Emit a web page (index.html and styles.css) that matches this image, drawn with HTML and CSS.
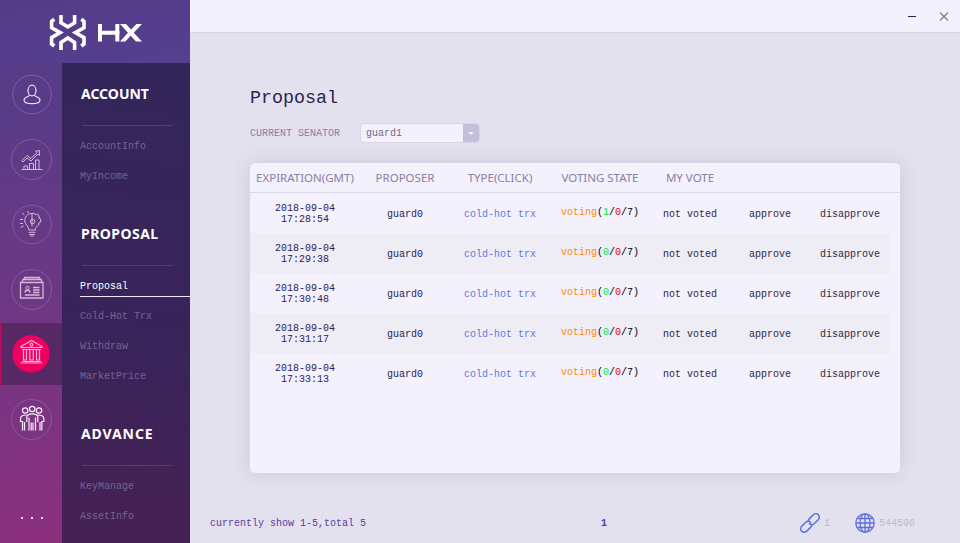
FILE: index.html
```html
<!DOCTYPE html>
<html lang="en">
<head>
<meta charset="utf-8">
<title>HX Wallet</title>
<link rel="stylesheet" href="styles.css">
</head>
<body>
<div class="app">
  <aside class="sidebar">
    <div class="brand">
      <svg width="94" height="36" viewBox="49 14 94 36" fill="none" stroke="#fff">
        <g stroke-width="3.600">
          <path d="M61 15v7.800l6.800 4 6.800-4V15"/>
          <path d="M61 50v-7.500l6.800-4.500 6.800 4.500V50"/>
          <path d="M54.300 19.300l-2.700 2v6.400l8.600 4.900-8.600 5v6.400l2.700 2"/>
          <path d="M81.300 19.300l2.700 2v6.400l-8.600 4.900 8.600 5v6.400l-2.700 2"/>
        </g>
        <path stroke-width="4" d="M100 24v17.500M117.300 24v17.500M98.500 32.800h21"/>
        <path fill="#fff" stroke="none" d="M120 24h6l5 5.500 5.500-5.500h5.500l-8.300 8.700 8.300 8.800h-6l-5.300-5.800-5.400 5.800h-5.300l8-8.700z"/>
      </svg>
    </div>
    <div class="side-body">
      <nav class="rail">
        <a class="rail-item"><svg width="41" height="41" viewBox="11 74 41 41"><circle class="ring" cx="32" cy="94.500" r="19.300"/><ellipse cx="32" cy="90.500" rx="4" ry="5.300"/><path d="M29.700 95.200c-.5 1.500-5.700 1.600-5.700 5.100 0 2.200 2.500 3.400 8 3.400s8-1.200 8-3.400c0-3.500-5.200-3.600-5.700-5.100"/></svg></a>
        <a class="rail-item"><svg width="41" height="41" viewBox="11 139 41 41"><circle class="ring" cx="31.500" cy="159.500" r="20"/><path d="M21.500 169.500h21M24 169.500v-3.500h3.500v3.500M29.500 169.500v-6h4v6M35.500 169.500v-9.500h3.500v9.500M22 160.500l5-5 4 3 6-6-1.500-1.200 4-.8v5l-1.500-1.500-7 7-4-3-4 4z"/></svg></a>
        <a class="rail-item"><svg width="41" height="41" viewBox="11 204 41 41"><circle class="ring" cx="32" cy="224.500" r="19.300"/><path d="M32 213.500c-5 0-7.500 4-7.200 7.500.3 4 4 5 4 9h6.500c0-2 1-3 2-4l1.500-1v-2l2-1v-3l-2-1 .5-2-2-2-2 .8-1-1.600zM32 213.500v13M28.800 232.300h6.500M29 234.500h6M30.500 236h3M20 219.500h3M20.500 227.500l3-1.500M22 213l2.500 2M28 211v2M20 223.500h3"/><circle cx="32.500" cy="221.500" r="2.200"/></svg></a>
        <a class="rail-item"><svg width="41" height="41" viewBox="11 269 41 41"><circle class="ring" cx="31.500" cy="289.500" r="20"/><path stroke-width="1.300" d="M20.500 282.500h22.500v15.500H20.500zM22 282l1-2.500h18l1 2.500M24 279l.7-1.500h14.600l.7 1.500M25 292.500c0-3 5-3 5 0M33 287.500h6.500M33 290h6.500M33 292.500h6.500M25 295h14.500"/><circle cx="27.500" cy="288" r="1.700"/></svg></a>
        <a class="rail-item active"><svg width="41" height="41" viewBox="11 334 41 41"><circle class="disc" cx="31" cy="354" r="18.700"/><path d="M21 346.500l10.500-6 10.500 6v1h-21zM22 349.500h19M23.500 350v10h3v-10M29.800 350v10h3.500v-10M36.500 350v10h3v-10M22 361.500h19M20.500 363h22"/><circle cx="31.500" cy="344.800" r="1.400"/></svg></a>
        <a class="rail-item people"><svg width="41" height="41" viewBox="11 399 41 41"><circle class="ring" cx="31.500" cy="419.500" r="20"/><circle cx="32.200" cy="409" r="2.700"/><circle cx="25.200" cy="410.500" r="2.700"/><circle cx="39" cy="410.500" r="2.700"/><path d="M22.500 430.500v-9h-2v-3c0-3 2-3.500 6-3.500M41.800 430.500v-9h2v-3c0-3-2-3.500-6-3.500M26.800 422v-5c0-2.500 2-3.200 5.500-3.200s5.500.7 5.500 3.200v5M29 417.500v13M35.500 417.500v13M24.500 422v8.500M40 422v8.500M31.200 422.500v8M33 422.500v8"/></svg></a>
        <div class="more"><i></i><i></i><i></i></div>
      </nav>
      <nav class="menu">
        <section class="group">
          <h2>ACCOUNT</h2>
          <a>AccountInfo</a><a>MyIncome</a>
        </section>
        <section class="group">
          <h2 class="g-proposal">PROPOSAL</h2>
          <a class="current">Proposal</a><a>Cold-Hot Trx</a><a>Withdraw</a><a>MarketPrice</a>
        </section>
        <section class="group">
          <h2 class="g-advance">ADVANCE</h2>
          <a>KeyManage</a><a>AssetInfo</a>
        </section>
      </nav>
    </div>
  </aside>
  <main class="main">
    <header class="titlebar">
      <svg width="44" height="12" viewBox="906 10 44 12" fill="none"><path d="M908 16.500h8" stroke="#2c1e5c"/><path d="M940 12.500l8 8M948 12.500l-8 8" stroke="#837b99" stroke-width="1.200"/></svg>
    </header>
    <div class="content">
      <h1>Proposal</h1>
      <div class="filter">
        <span class="label">CURRENT SENATOR</span>
        <div class="select"><span>guard1</span><b></b></div>
      </div>
      <div class="card">
        <div class="row head"><span>EXPIRATION(GMT)</span><span>PROPOSER</span><span>TYPE(CLICK)</span><span>VOTING STATE</span><span>MY VOTE</span></div>
        <div class="row"><span class="time">2018-09-04<br>17:28:54</span><span>guard0</span><span class="link">cold-hot trx</span><span class="state">voting<em>(<i>1</i>/<b>0</b>/7)</em></span><span>not voted</span><span class="action">approve</span><span class="action">disapprove</span></div>
        <div class="row"><span class="time">2018-09-04<br>17:29:38</span><span>guard0</span><span class="link">cold-hot trx</span><span class="state">voting<em>(<i>0</i>/<b>0</b>/7)</em></span><span>not voted</span><span class="action">approve</span><span class="action">disapprove</span></div>
        <div class="row"><span class="time">2018-09-04<br>17:30:48</span><span>guard0</span><span class="link">cold-hot trx</span><span class="state">voting<em>(<i>0</i>/<b>0</b>/7)</em></span><span>not voted</span><span class="action">approve</span><span class="action">disapprove</span></div>
        <div class="row"><span class="time">2018-09-04<br>17:31:17</span><span>guard0</span><span class="link">cold-hot trx</span><span class="state">voting<em>(<i>0</i>/<b>0</b>/7)</em></span><span>not voted</span><span class="action">approve</span><span class="action">disapprove</span></div>
        <div class="row"><span class="time">2018-09-04<br>17:33:13</span><span>guard0</span><span class="link">cold-hot trx</span><span class="state">voting<em>(<i>0</i>/<b>0</b>/7)</em></span><span>not voted</span><span class="action">approve</span><span class="action">disapprove</span></div>
      </div>
    </div>
    <footer class="footer">
      <span class="summary">currently show 1-5,total 5</span>
      <span class="page">1</span>
      <span class="status">
        <svg width="22" height="22" viewBox="0 0 22 22" fill="none" stroke="#5a6fe0" stroke-width="1.500"><g transform="rotate(-45 11 11)"><path d="M10 10.500c.3 2.500 1.600 4 3.700 4h5.500a3.500 3.500 0 0 0 0-7h-5.500c-1 0-1.800.3-2.400.9"/><path d="M12 11.500c-.3-2.500-1.600-4-3.700-4H2.800a3.500 3.500 0 0 0 0 7h5.500c1 0 1.800-.3 2.400-.9"/></g></svg>
        <span class="peers">1</span>
        <svg width="20" height="20" viewBox="0 0 20 20" fill="none" stroke="#5a6fe0" stroke-width="1.300"><circle cx="10" cy="10" r="9.200"/><ellipse cx="10" cy="10" rx="5" ry="9.200"/><path d="M10 1v18M1 10h18M2.500 5.500h15M2.500 14.500h15"/></svg>
        <span class="height">544596</span>
      </span>
    </footer>
  </main>
</div>
</body>
</html>
```
FILE: styles.css
```css
* { box-sizing: border-box; }
body { margin: 0; font: 10px/11px "Liberation Mono", monospace; color: #2f2254; }
h1, h2 { margin: 0; font-weight: 400; }
.app { display: flex; width: 960px; height: 543px; overflow: hidden; }

.sidebar { width: 190px; display: flex; flex-direction: column; background: linear-gradient(175deg, #553d8a 0%, #593c88 20%, #6f3784 55%, #8d2f7d 100%); }
.brand { height: 63px; padding: 14px 0 0 49px; background: linear-gradient(170deg, #543c87, #544090); }
.brand svg { display: block; }
.side-body { flex: 1; display: flex; }

.rail { width: 62px; display: flex; flex-direction: column; margin-top: -1px; }
.rail-item { height: 65px; display: flex; align-items: center; padding-left: 11px; }
.rail-item svg { fill: none; stroke: #d3badb; stroke-width: 1; }
.rail-item:first-child svg { stroke: #eee4f4; stroke-width: 1.2; }
.rail-item .ring { stroke: #855aa0; stroke-width: 1; }
.rail-item.active { height: 62px; margin: 1px 0 2px; background: #562864; box-shadow: inset 2px 0 2px -1px #e3055f; }
.rail-item.active svg { stroke: #ffb4d3; stroke-width: 1.2; }
.active .disc { fill: #ee0060; stroke: none; }
.rail-item.people svg { stroke: #f7eefa; stroke-width: 1.2; }
.more { display: flex; gap: 8px; margin: 65px 0 0 21px; }
.more i { width: 2px; height: 2px; background: #eadcea; }

.menu { flex: 1; background: linear-gradient(188deg, #33265b 0%, #3a245a 60%, #472053 100%); }
.group { margin-bottom: 12px; }
.group h2 { height: 63px; margin: 0 17px 5px 20px; font: 700 14px/62px "Noto Sans", sans-serif; color: #fff; border-bottom: 1px solid #4f3a8d; white-space: nowrap; text-indent: -1px; }
.group .g-proposal { letter-spacing: .45px; }
.group .g-advance { letter-spacing: .9px; }
.group a { display: block; height: 30px; margin-left: 18px; line-height: 31px; color: #75648f; }
.group .current { height: 28px; margin-bottom: 2px; color: #fff; }
.group .current::after { content: ""; display: block; height: 1px; margin-top: -6px; background: #eee8f7; }

.main { flex: 1; display: flex; flex-direction: column; background: #e4e1ee; }
.titlebar { height: 33px; padding: 10px 10px 0 0; text-align: right; background: #f3f1fb; border-bottom: 1px solid #d7d2e5; line-height: 0; }
.content { flex: 1; padding: 52px 60px 0; }
h1 { font-size: 18.33px; line-height: 28px; height: 26px; }
.filter { display: flex; align-items: center; height: 20px; margin-top: 12px; }
.label { width: 110px; color: #8a7fa5; }
.select { width: 120px; height: 20px; display: flex; justify-content: space-between; align-items: center; padding-left: 5px; background: #f3f1fb; border: 1px solid #dad6e7; border-radius: 4px; color: #75698f; overflow: hidden; }
.select span { padding-top: 1px; }
.select b { width: 16px; height: 20px; background: #c5bed9; display: flex; align-items: center; justify-content: center; }
.select b::after { content: ""; border: 3px solid transparent; border-top: 3px solid #f3f1fb; border-bottom: 0; }

.card { width: 650px; height: 310px; margin-top: 20px; background: #f3f1fb; border-radius: 5px; box-shadow: 0 0 18px rgba(70, 55, 110, .16); }
.row { display: grid; grid-template-columns: 110px 90px 100px 100px 80px 80px 80px; width: 640px; height: 40px; align-items: center; text-align: center; }
.row span { padding-top: 2px; }
.row:nth-child(odd) { background: #eeecf5; }
.row.head { width: 650px; height: 30px; background: none; border-bottom: 1px solid #dcd8e8; font: 11.5px/29px "Noto Sans", sans-serif; color: #8a7fa5; white-space: nowrap; }
.row.head span { padding: 0; }
.row .time { padding-top: 1px; }
.row .link { color: #6478e0; }
.row .action { color: #332a40; }
.row .state { color: #ff8b00; padding: 0 0 1px; }
.state em { font-style: normal; color: #000; }
.state i { font-style: normal; color: #0bea20; }
.state b { font-weight: 400; color: #f00000; }

.footer { display: flex; align-items: center; height: 40px; padding-left: 20px; color: #5b3aa5; }
.summary { width: 391px; padding-top: 1px; }
.page { width: 198px; font-weight: 700; }
.status { display: flex; align-items: center; color: #bcbacd; }
.peers { width: 30px; padding-left: 3px; margin-right: 4px; }
.height { margin-left: 4px; }
.peers, .height, .status svg { flex: none; }
```
